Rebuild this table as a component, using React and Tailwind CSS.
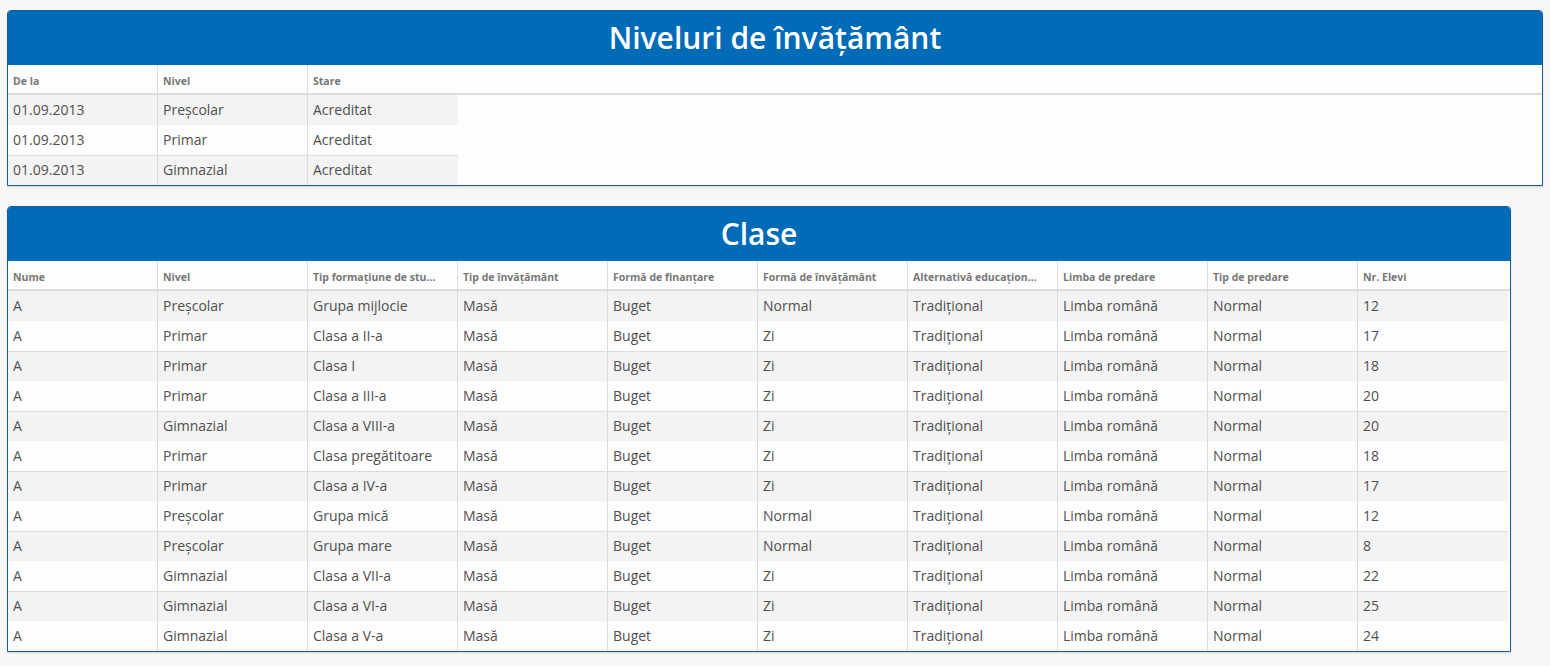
import React from "react";

const nivHead = ["De la", "Nivel", "Stare"];
const nivRows = [
  ["01.09.2013", "Preșcolar", "Acreditat"],
  ["01.09.2013", "Primar", "Acreditat"],
  ["01.09.2013", "Gimnazial", "Acreditat"],
];

const claseHead = [
  "Nume",
  "Nivel",
  "Tip formațiune de studiu",
  "Tip de învățământ",
  "Formă de finanțare",
  "Formă de învățământ",
  "Alternativă educațională",
  "Limba de predare",
  "Tip de predare",
  "Nr. Elevi",
];

const c = (nivel, tip, forma, nr) => ["A", nivel, tip, "Masă", "Buget", forma, "Tradițional", "Limba română", "Normal", nr];

const claseRows = [
  c("Preșcolar", "Grupa mijlocie", "Normal", "12"),
  c("Primar", "Clasa a II-a", "Zi", "17"),
  c("Primar", "Clasa I", "Zi", "18"),
  c("Primar", "Clasa a III-a", "Zi", "20"),
  c("Gimnazial", "Clasa a VIII-a", "Zi", "20"),
  c("Primar", "Clasa pregătitoare", "Zi", "18"),
  c("Primar", "Clasa a IV-a", "Zi", "17"),
  c("Preșcolar", "Grupa mică", "Normal", "12"),
  c("Preșcolar", "Grupa mare", "Normal", "8"),
  c("Gimnazial", "Clasa a VII-a", "Zi", "22"),
  c("Gimnazial", "Clasa a VI-a", "Zi", "25"),
  c("Gimnazial", "Clasa a V-a", "Zi", "24"),
];

function Panel({ title, head, rows, widthClass }) {
  return (
    <div className={`${widthClass} border border-[#1b5c9b] rounded-t-[4px] bg-[#fdfdfd] shadow-[0_1px_2px_rgba(0,0,0,0.15)] overflow-hidden`}>
      <div className="h-[54px] bg-[#006bb6] flex items-center justify-center">
        <span className="text-white text-[30px] font-semibold leading-none">{title}</span>
      </div>
      <div className="flex h-[30px] border-b-2 border-[#dcdcdc] bg-[#fdfdfd]">
        {head.map((h, i) => (
          <div
            key={i}
            className={`w-[150px] shrink-0 h-full flex items-center pl-[5px] pr-[18px] pt-[5px] text-[10.5px] font-bold text-[#777] ${i < head.length - 1 ? "border-r border-[#dcdcdc]" : ""}`}
          >
            <span className="truncate block w-full">{h}</span>
          </div>
        ))}
      </div>
      <div className="flex flex-col">
        {rows.map((r, ri) => (
          <div
            key={ri}
            className={`flex h-[30px] w-fit ${ri % 2 === 0 ? "bg-[#f3f3f3]" : "bg-[#fdfdfd]"} ${ri % 2 === 0 && ri > 0 ? "border-t border-[#dcdcdc]" : ""}`}
          >
            {r.map((v, ci) => (
              <div
                key={ci}
                className={`w-[150px] shrink-0 h-full flex items-center px-[5px] pb-[2px] text-[14px] text-[#505050] ${ci < r.length - 1 ? "border-r border-[#dcdcdc]" : ""}`}
              >
                <span className="truncate">{v}</span>
              </div>
            ))}
          </div>
        ))}
      </div>
    </div>
  );
}

export default function App() {
  return (
    <div className="min-h-[666px] bg-[#f7f7f7] pt-[10px] pl-[7px] pr-[7px]" style={{ fontFamily: '"Open Sans", "Noto Sans", sans-serif' }}>
      <div className="flex flex-col gap-[20px]">
        <Panel title="Niveluri de învățământ" head={nivHead} rows={nivRows} widthClass="w-[1536px]" />
        <Panel title="Clase" head={claseHead} rows={claseRows} widthClass="w-[1504px]" />
      </div>
    </div>
  );
}
